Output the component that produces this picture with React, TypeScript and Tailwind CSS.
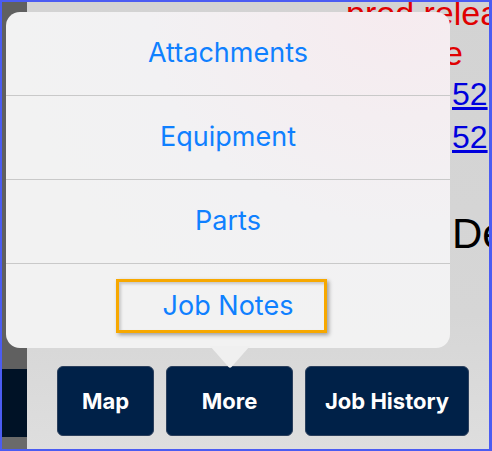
import React from "react";

const items = ["Attachments", "Equipment", "Parts", "Job Notes"];

export default function App() {
    return (
        <div className="relative w-[492px] h-[451px] flex overflow-hidden border-2 border-r-[3px] border-[#4b5cf2] font-['Liberation_Sans',Arial,sans-serif]">
            {/* left strip of the page behind */}
            <div className="w-[25px] shrink-0 flex flex-col">
                <div className="h-[367px] bg-[#606060]" />
                <div className="h-[68px] bg-[#001226]" />
                <div className="flex-1 bg-[#6a6a6a]" />
            </div>

            {/* page behind the popover */}
            <div className="flex-1 min-w-0 overflow-hidden flex flex-col bg-[linear-gradient(180deg,#d3d3d3,#d6d6d6_70%,#dedede)]">
                <div className="flex flex-col pl-[319px] whitespace-nowrap">
                    <div className="mt-[-6px] h-[34px] text-[34px] leading-none text-[#e00000]">prod release</div>
                    <div className="mt-[6px] ml-[98px] h-[34px] text-[34px] leading-none text-[#e00000]">e</div>
                    <div className="mt-[8px] ml-[106px] h-[32px] text-[32px] leading-none text-[#0000dd] underline">52</div>
                    <div className="mt-[11px] ml-[106px] h-[32px] text-[32px] leading-none text-[#0000dd] underline">52</div>
                    <div className="mt-[60px] ml-[106px] h-[42px] text-[42px] leading-none text-black">De</div>
                </div>

                <div className="mt-auto pb-[13px] pl-[30px] flex gap-3 font-['Inter',sans-serif] font-bold text-white text-[22px]">
                    <button className="w-[97px] h-[70px] shrink-0 rounded-[6px] bg-[#002148] border border-[#2b3f5c]">Map</button>
                    <button className="w-[127px] h-[70px] shrink-0 rounded-[6px] bg-[#002148] border border-[#2b3f5c]">More</button>
                    <button className="w-[164px] h-[70px] shrink-0 rounded-[6px] bg-[#002148] border border-[#2b3f5c]">Job History</button>
                </div>
            </div>

            {/* popover menu */}
            <div className="absolute left-[4px] top-[10px] w-[444px]">
                <div className="rounded-[14px] overflow-hidden bg-[radial-gradient(ellipse_at_88%_0%,#f6ebef,#f2f1f3_45%,#f2f2f2_70%)] font-['Inter',sans-serif] text-[27px] text-[#0f80ff]">
                    {items.map((label, i) => (
                        <div
                            key={label}
                            className={
                                i < items.length - 1
                                    ? "h-[84px] flex items-center justify-center border-b border-[#c9c9c9]"
                                    : "h-[84px] flex items-center justify-center"
                            }
                        >
                            {label}
                        </div>
                    ))}
                </div>
                <svg className="absolute left-[204px] top-[334px]" width="40" height="22" viewBox="0 0 40 22">
                    <path d="M0 0 L40 0 L21.5 21 Q20 22.5 18.5 21 Z" fill="#f0f0f0" />
                </svg>
                <div className="absolute left-[110px] top-[267px] w-[211px] h-[54px] border-[3px] border-[#f7a800] shadow-[2px_2px_4px_rgba(0,0,0,0.35),inset_2px_2px_3px_rgba(0,0,0,0.18)]" />
            </div>
        </div>
    );
}
